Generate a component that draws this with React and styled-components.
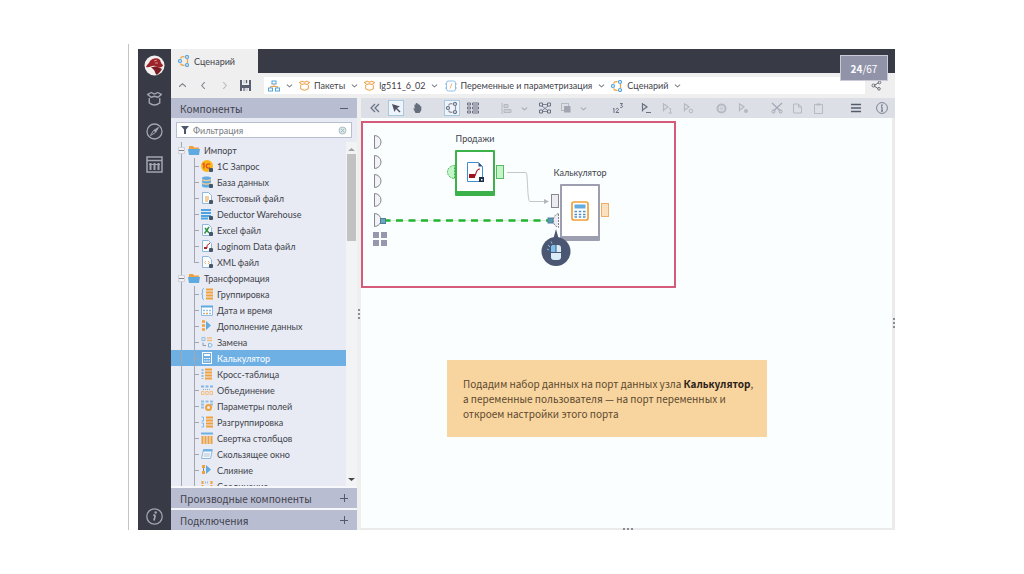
import React, { Component } from 'react'
import styled, { createGlobalStyle } from 'styled-components'


// ---------- icons ----------

const Svg = ({ s = 12, w, h, vb, children }) => (
    <svg width={w || s} height={h || s} viewBox={vb || `0 0 ${w || s} ${h || s}`} fill="none" aria-hidden="true">
        {children}
    </svg>
)

const FileBase = () => (
    <path d="M1.5 .5h6l3 3v8h-9z" fill="#fbfdff" stroke="#8fb6dc" />
)
const Badge = () => (
    <rect x="8" y="8" width="4" height="4" rx="1" fill="#44566c" />
)
const Bars = ({ color = '#f0a03c', x = 5 }) => (
    <path d={`M${x} 1.5h7M${x} 4.5h7M${x} 7.5h7M${x} 10.5h7`} stroke={color} strokeWidth="2" />
)

const treeIcons = {
    folder: <Svg><path d="M1 2h4l1 1.500h5v3H1z" fill="#f0a03c" /><path d="M0 5h12l-1 6H1z" fill="#5ea9e0" /></Svg>,
    onec: <Svg><circle cx="6" cy="6" r="6" fill="#fbb616" /><path d="M1.500 4.500l1.500-1v5M9 4.500a2.200 2.200 0 1 0 0 3" stroke="#e2501f" strokeWidth="1.300" /><Badge /></Svg>,
    db: <Svg><path d="M1 2c0-2 9-2 9 0v8c0 2-9 2-9 0z" fill="#62abe0" /><path d="M1 3.500c2 1.500 7 1.500 9 0M1 7c2 1.500 7 1.500 9 0" stroke="#f3cd94" strokeWidth="1.300" /><Badge /></Svg>,
    text: <Svg><FileBase /><path d="M4 5h4M4 7h4M4 9h3" stroke="#f0a03c" /><Badge /></Svg>,
    dw: <Svg><path d="M0 2h10M0 5h10M0 8h10M0 10.500h7" stroke="#4fa3e0" strokeWidth="2" /><Badge /></Svg>,
    excel: <Svg><FileBase /><path d="M4 4l4 5M8 3L3.500 9.500" stroke="#2f9448" strokeWidth="1.500" /><Badge /></Svg>,
    lgd: <Svg><FileBase /><path d="M9 3L6 5.500V8" stroke="#b1202a" /><rect x="3" y="7" width="3" height="2" fill="#b1202a" /><Badge /></Svg>,
    xml: <Svg><FileBase /><path d="M5 5L3.500 6.500 5 8M7 5l1.500 1.500L7 8" stroke="#efb878" /><Badge /></Svg>,
    group: <Svg><path d="M3 .5c-3 0 0 5-2.500 5.500C3 6.500 0 11.500 3 11.500" stroke="#6db1e4" /><Bars /></Svg>,
    date: <Svg><path d="M.5 2.500h11v9H.5z" fill="#fff" stroke="#8fbfe6" /><path d="M0 2.500h12" stroke="#5ea9e0" strokeWidth="2" /><path d="M2 6.500h2M5 6.500h2M8 6.500h2M2 9.500h2M8 9.500h2" stroke="#8fbfe6" strokeWidth="1.500" /><path d="M5 9.500h2" stroke="#f0a03c" strokeWidth="1.500" /></Svg>,
    enrich: <Svg><path d="M1 1.500h3M1 5.500h3M1 9.500h3" stroke="#f0a03c" strokeWidth="2.500" /><path d="M5 1l5 4.500L5 10z" fill="#62abe0" /></Svg>,
    replace: <Svg><path d="M1 1.500h3v3H1z" stroke="#8fbfe6" /><path d="M6 2h5M6 4.500h5" stroke="#f3bf80" strokeWidth="1.500" /><path d="M2 6.500v3h3" stroke="#8a99ad" /><path d="M7.500 7.500h2c2 0 2 3.500 0 3.500h-2z" stroke="#7eb8e6" /></Svg>,
    calc: <Svg><rect x="1.500" y=".5" width="9" height="11" stroke="#fff" /><path d="M3 3h6" stroke="#fff" strokeWidth="2" /><path d="M3 6.500h1.500M5.250 6.500h1.500M7.500 6.500H9M3 9h1.500M5.250 9h1.500M7.500 9H9" stroke="#fff" /></Svg>,
    cross: <Svg><path d="M1.500 1v10" stroke="#8fbfe6" strokeDasharray="2 1" strokeWidth="2" /><Bars x={4} /></Svg>,
    union: <Svg><path d="M0 2.500h3M4.500 2.500h3M9 2.500h3" stroke="#7eb8e6" strokeWidth="2" /><path d="M2 5.500h8" stroke="#9aa7b8" strokeDasharray="1 1" /><path d="M.5 7.500h2.500v3H.5zM4.750 7.500h2.500v3h-2.500zM9 7.500h2.500v3H9z" stroke="#f3bf80" /></Svg>,
    fields: <Svg><path d="M0 1.500h3M4.500 1.500h3M9 1.500h3M0 4.500h3M9 4.500h3M0 7.500h3" stroke="#8fbfe6" strokeWidth="2" /><circle cx="7.500" cy="7.500" r="2.500" stroke="#f0a03c" strokeWidth="2" /></Svg>,
    ungroup: <Svg><path d="M.5 1h2v4h-2M.5 7h2v4h-2" stroke="#7eb8e6" /><Bars /></Svg>,
    fold: <Svg><path d="M0 1.500h12" stroke="#6db1e4" strokeWidth="2" /><path d="M1.500 4v8M4.500 4v8M7.500 4v8M10.500 4v8" stroke="#f0a03c" strokeWidth="2" /></Svg>,
    slide: <Svg><path d="M2.500 1.500h9l-2 9h-9z" fill="#f4f9fe" stroke="#8fb6dc" /><path d="M2 2.500h9" stroke="#6db1e4" strokeWidth="2" /><path d="M3 6h6M2.500 8h6" stroke="#b4c3d4" /></Svg>,
    merge: <Svg><path d="M1 1h3v3H1zM1 7h3v3H1z" fill="#f0a03c" /><path d="M2.500 4v3" stroke="#7d8896" /><path d="M5 1l5 4.500L5 10z" fill="#62abe0" /></Svg>,
    join: <Svg><path d="M1.500 1v11M10.500 1v11" stroke="#f0a03c" strokeWidth="2" strokeDasharray="3 1" /><path d="M4 2.500h4" stroke="#8fbfe6" strokeWidth="2" strokeDasharray="1 1" /><path d="M6 6v6" stroke="#8fbfe6" strokeWidth="2" /></Svg>
}

const ScenarioIcon = ({ s = 12, a = '#4fa3e0', b = '#f0a03c' }) => (
    <Svg s={s} vb="0 0 12 12">
        <path d="M2.500 3.500c.5-1.500 2-2 4-1.700M2.500 8.500c.5 1.500 2 2 4 1.700M9.500 4v4" stroke={b} strokeWidth="1.200" />
        <circle cx="2" cy="6" r="1.500" stroke={a} strokeWidth="1.200" />
        <circle cx="9" cy="2" r="1.500" stroke={a} strokeWidth="1.200" />
        <circle cx="9" cy="10" r="1.500" stroke={a} strokeWidth="1.200" />
    </Svg>
)
const PackageIcon = ({ s = 11, color = '#efa24a' }) => (
    <Svg s={s} vb="0 0 12 12">
        <path d="M6 2.500L3.500 1.200 .5 2.700 3.200 5 6 4.200 8.800 5l2.700-2.300-3-1.500L6 2.500M1.800 5.500v4c2.500 2 5.900 2 8.400 0v-4" stroke={color} strokeWidth="1.100" strokeLinejoin="round" />
    </Svg>
)
const TreeRootIcon = () => (
    <Svg>
        <rect x="4" y="1" width="4" height="3" stroke="#4fa3e0" />
        <path d="M6 4v2.500M2.500 8V6.500h7V8" stroke="#efa24a" />
        <rect x=".5" y="8" width="4" height="3" stroke="#4fa3e0" />
        <rect x="7.500" y="8" width="4" height="3" stroke="#4fa3e0" />
    </Svg>
)
const ModuleIcon = () => (
    <Svg>
        <rect x="1.500" y="1" width="9" height="10" rx="2" stroke="#8cc0e8" />
        <path d="M0 4h2M0 8h2M10 4h2M10 8h2" stroke="#8cc0e8" />
        <path d="M7 3.500L5 8.500" stroke="#efb878" />
    </Svg>
)
const Chevron = ({ dir = 'down', color = '#7d8089', w = 7 }) => {
    const d = { down: 'M1 3l3 2.500L7 3', up: 'M0 5.500L4 2l4 3.500', left: 'M5.500 0L2 4l3.500 4', right: 'M2.500 0L6 4 2.500 8' }
    return <Svg s={w} vb="0 0 8 8"><path d={d[dir]} stroke={color} strokeWidth="1.200" /></Svg>
}
const LogoIcon = () => (
    <Svg s={21}>
        <circle cx="10.500" cy="10.500" r="10" fill="#f4efef" />
        <path d="M2 12c1-3 3-3 4-6 2-3 8-4 10-1 1 2 1 4 3 5 0 2-3 3-5 2l-3-1c-3-1-5 2-9 1z" fill="#9c2429" />
        <path d="M7 12c3 0 5-1 7 0l4 2-2 3-3 3c-2-1-2-4-3-5z" fill="#7b1c22" />
        <path d="M10 6l3-1M11 8l3 0" stroke="#d98a86" />
    </Svg>
)
const CompassIcon = () => (
    <Svg s={17}><circle cx="8.500" cy="8.500" r="7.500" stroke="#a3a5b0" strokeWidth="1.300" /><path d="M12.500 4.500l-3 5-5 3 3-5z" stroke="#a3a5b0" /><path d="M12.500 4.500l-3 5-2-2z" fill="#a3a5b0" /></Svg>
)
const TableIcon = () => (
    <Svg s={17}><rect x="1" y="1" width="15" height="15" stroke="#a3a5b0" strokeWidth="1.500" /><path d="M1 4.500h15" stroke="#a3a5b0" strokeWidth="1.500" /><path d="M4.500 7v7M8.500 7v7M12.500 7v7" stroke="#a3a5b0" strokeWidth="2" /><path d="M3 8.500h11" stroke="#a3a5b0" /></Svg>
)
const InfoIcon = ({ s = 17, color = '#a3a5b0', slant = true }) => (
    <Svg s={s} vb="0 0 17 17"><circle cx="8.500" cy="8.500" r="7.700" stroke={color} strokeWidth="1.300" /><path d={slant ? 'M9.300 7l-1.300 5.500M7.300 7.200h2' : 'M8.500 7v6M7 7h1.500M7 12.800h3'} stroke={color} strokeWidth="1.700" /><circle cx={slant ? 9.700 : 8.500} cy="4.500" r="1.200" fill={color} /></Svg>
)
const SaveIcon = () => (
    <Svg s={11}><path d="M0 0h2v5h7V0h2v11H9V8H2v3H0z" fill="#5a5f70" /><path d="M3 0h5v3.500H3zM3 8h5v3H3z" fill="#d4d6dc" /><path d="M6.500 0v3M4 8v3" stroke="#5a5f70" /></Svg>
)
const ShareIcon = () => (
    <Svg s={11}><path d="M3 5.500L8 2.500M3 6l4 2.500" stroke="#6b6f7a" /><circle cx="2.500" cy="5.500" r="1.500" stroke="#6b6f7a" /><circle cx="8.500" cy="2.500" r="1.300" stroke="#6b6f7a" /><circle cx="8" cy="8.800" r="1.300" stroke="#6b6f7a" /></Svg>
)
const FunnelIcon = () => (
    <Svg s={8}><path d="M0 0h8L5 3.500V8H3V3.500z" fill="#4b5468" /></Svg>
)

const dark = '#6a7183'
const pale = '#b4b9c2'
const Play = ({ color, children }) => (
    <Svg><path d="M2.500 1v8.500M2.500 1.500L7 5 2.500 8" stroke={color} strokeWidth="1.200" />{children}</Svg>
)

const tools = [
    { id: 'Свернуть', icon: <Svg s={10}><path d="M5 1L1 5l4 4M9 1L5 5l4 4" stroke={dark} strokeWidth="1.200" /></Svg> },
    { id: 'Выделение', framed: true, icon: <Svg s={10}><path d="M1 1l8 2.500-3 1.500L9.500 8.500 8.500 9.500 5 6 3.500 9z" fill="#4b5266" /></Svg> },
    { id: 'Перемещение', icon: <Svg><path d="M2 6l1.500 1V2.500h1.300V1h1.400v.8h1.400v1H9v1.400h1.300v4L8.500 11h-4z" fill="#666d7c" /></Svg> },
    { id: 'Схема', gap: 14, framed: true, icon: <ScenarioIcon a="#6a7183" b="#8d94a3" /> },
    { id: 'Список', icon: <Svg><path d="M.5 1h3v2h-3zM.5 5h3v2h-3zM.5 9h3v2h-3zM5.500 1h6v2h-6zM5.500 5h6v2h-6zM5.500 9h6v2h-6z" stroke={dark} /></Svg> },
    { id: 'Выравнивание', gap: 13, icon: <Svg s={11}><path d="M1 0v11" stroke={pale} /><path d="M3 1.500h4v3H3zM3 6.500h7v3H3z" fill="#cbcfd7" stroke={pale} /></Svg> },
    { id: 'Варианты выравнивания', width: 14, icon: <Chevron color="#a4a9b4" /> },
    { id: 'Разместить', gap: 3, icon: <Svg><path d="M4 2.500h4M4 9.500h4M3 4l5 4M9 4L4 8" stroke={dark} strokeWidth=".8" /><path d="M.5 1h3v3h-3zM8.500 1h3v3h-3zM.5 8h3v3h-3zM8.500 8h3v3h-3z" fill="#dfe2e9" stroke={dark} /></Svg> },
    { id: 'Порядок', icon: <Svg s={10}><rect x=".5" y=".5" width="7" height="7" stroke={pale} /><rect x="3" y="3" width="6.500" height="6.500" fill="#a0a5b0" /></Svg> },
    { id: 'Варианты порядка', width: 14, icon: <Chevron color="#a4a9b4" /> },
    { id: 'Нумерация', gap: 17, icon: <Svg><path d="M1 7l1-.7V11M4 7.500c0-1.500 2.500-1.500 2.500 0L4 10.500h3M8 1.500h2.500L9 3.500c2.500 0 2 2.500-.8 2" stroke={dark} /></Svg> },
    { id: 'Выполнить', gap: 7, icon: <Play color={dark}><path d="M6 10.500h5" stroke={dark} /></Play> },
    { id: 'Выполнить узел', icon: <Play color={pale}><path d="M8 6.500h1.500V11M7.500 11h3.500" stroke={pale} /></Play> },
    { id: 'Настроить запуск', icon: <Play color={pale}><circle cx="9" cy="9" r="1.800" stroke={pale} /></Play> },
    { id: 'Остановить', gap: 13, icon: <Svg s={11}><circle cx="5.500" cy="5.500" r="4" stroke={pale} strokeWidth="2" /><circle cx="5.500" cy="5.500" r="2" fill="#c9cdd5" /></Svg> },
    { id: 'Переобучить', icon: <Play color={pale}><circle cx="9" cy="9" r="2" fill={pale} /></Play> },
    { id: 'Вырезать', gap: 13, icon: <Svg><path d="M1 1l8.500 8M11 1L2.500 9" stroke="#a4a9b4" strokeWidth="1.200" /><circle cx="2.500" cy="9.500" r="1.500" stroke="#a4a9b4" /><circle cx="9.500" cy="9.500" r="1.500" stroke="#a4a9b4" /></Svg> },
    { id: 'Копировать', icon: <Svg s={11}><path d="M1.500 1h5l3 3v6h-8zM6.500 1v3h3" stroke={pale} /></Svg> },
    { id: 'Вставить', icon: <Svg s={11}><path d="M1.500 1.500h8v9h-8z" stroke={pale} /><path d="M3.500 1.500h4" stroke={pale} strokeWidth="2" /></Svg> }
]

const treeData = [
    {
        name: 'Импорт',
        items: [
            ['onec', '1С Запрос'], ['db', 'База данных'], ['text', 'Текстовый файл'], ['dw', 'Deductor Warehouse'],
            ['excel', 'Excel файл'], ['lgd', 'Loginom Data файл'], ['xml', 'XML файл']
        ]
    },
    {
        name: 'Трансформация',
        items: [
            ['group', 'Группировка'], ['date', 'Дата и время'], ['enrich', 'Дополнение данных'], ['replace', 'Замена'],
            ['calc', 'Калькулятор'], ['cross', 'Кросс-таблица'], ['union', 'Объединение'], ['fields', 'Параметры полей'],
            ['ungroup', 'Разгруппировка'], ['fold', 'Свертка столбцов'], ['slide', 'Скользящее окно'],
            ['merge', 'Слияние'], ['join', 'Соединение']
        ]
    }
]

const crumbs = [
    { icon: <TreeRootIcon /> },
    { icon: <PackageIcon />, text: 'Пакеты' },
    { icon: <PackageIcon />, text: 'lg511_6_02' },
    { icon: <ModuleIcon />, text: 'Переменные и параметризация' },
    { icon: <ScenarioIcon />, text: 'Сценарий' }
]


class ComponentTree extends Component {

    render() {
        const { selected, filter, onSelect } = this.props
        const match = name => name.toLowerCase().includes(filter.toLowerCase())

        return (
            <Tree>
                {treeData.map((group, g) => {
                    const items = group.items.filter(item => match(item[1]))
                    return (
                        <li key={group.name}>
                            <TreeRow type="button">
                                <Rail $width={11} $start={g === 0} />
                                <Toggle />
                                {treeIcons.folder}
                                <RowText>{group.name}</RowText>
                            </TreeRow>
                            <ul>
                                {items.map(([icon, name], i) => (
                                    <li key={name}>
                                        <TreeRow type="button" $active={selected === name} onClick={() => onSelect(name)}>
                                            <Rail $width={11} />
                                            <Rail $width={13} $end={g === 0 && i === items.length - 1} />
                                            <Tick />
                                            {treeIcons[icon]}
                                            <RowText>{name}</RowText>
                                        </TreeRow>
                                    </li>
                                ))}
                            </ul>
                        </li>
                    )
                })}
            </Tree>
        )
    }
}


// wires and ports between the nodes
const Wires = () => (
    <WireLayer width="260" height="170" viewBox="0 0 260 170" fill="none" aria-hidden="true">
        {[24, 44, 63, 82, 102].map(y => (
            <path key={y} d={`M13.500 ${y - 6.500}a6.500 6.500 0 0 1 0 13z`} fill="#f3f2f7" stroke="#85868f" />
        ))}
        <path d="M12 114h6v6h-6zM20 114h6v6h-6zM12 122h6v6h-6zM20 122h6v6h-6z" fill="#9698ad" />
        <path d="M25 102.500h162" stroke="#d3f0d7" />
        <path d="M25 102.500h163" stroke="#22b32f" strokeWidth="2.600" strokeDasharray="7 5.500" strokeDashoffset="2.500" />
        <rect x="19.500" y="100.500" width="5" height="5" fill="#6da5bd" stroke="#4b7f99" />

        <path d="M93.500 47.500a7 6.500 0 0 0 0 13z" fill="#c3f5c8" stroke="#3fae4c" strokeDasharray="2 1" />
        <rect x="135.500" y="47.500" width="7" height="13" fill="#c3f5c8" stroke="#5cb867" />

        <path d="M146 54.500h19c2 0 1 29 4 29h14" stroke="#c4c6ca" />
        <path d="M183 81l5 2.500-5 2.500z" fill="#b4b6ba" />
        <rect x="190.500" y="76.500" width="7" height="13" fill="#ecebf2" stroke="#85868f" />
        <path d="M197.500 95.500c-7 2-7 12 0 14z" fill="#ecebf2" stroke="#85868f" strokeDasharray="2 1" />
        <rect x="187" y="100" width="5" height="5" fill="#5b9ab5" stroke="#4b7f99" />
        <rect x="240.500" y="85.500" width="7" height="13" fill="#fde0bd" stroke="#eeae6c" />
    </WireLayer>
)

const MouseHint = () => (
    <HintLayer width="30" height="38" viewBox="0 0 30 38" fill="none" aria-hidden="true">
        <path d="M15 0l3 11h-6z" fill="#4a5672" />
        <circle cx="15" cy="22.500" r="14.500" fill="#4a5672" />
        <rect x="10" y="16" width="10" height="15" rx="3" fill="#d9ecf8" />
        <path d="M10 23v-4a3 3 0 0 1 3-3h2v7z" fill="#7cc0ee" />
        <path d="M10 23.500h10M15 16v7.500" stroke="#4a5672" />
        <path d="M6 20l2 1M7 16l2 2M10 12.500l1 2" stroke="#7cc0ee" />
    </HintLayer>
)

const LoginomFile = () => (
    <Svg w={20} h={22}>
        <path d="M2.500 1.500h11l4 4v15h-15z" fill="#fff" stroke="#3f8fd0" />
        <path d="M13.500 1.500v4h4z" fill="#31568a" />
        <path d="M15 8c-5 0-3 6-6 8" stroke="#b1202a" strokeWidth="1.200" />
        <rect x="4" y="13" width="6" height="4" fill="#9c1420" />
        <rect x="14" y="16" width="5" height="5" fill="#1d2f49" />
        <rect x="16" y="18" width="1.500" height="1.500" fill="#fff" />
    </Svg>
)

const CalcIcon = () => (
    <Svg w={18} h={20}>
        <rect x="1" y="1" width="16" height="18" rx="2" fill="#fff" stroke="#f0a03c" strokeWidth="1.700" />
        <rect x="3.500" y="3.500" width="11" height="4" fill="#62abe0" />
        <path d="M3.500 10.500h11M3.500 13.500h11M3.500 16h11" stroke="#4f8fc8" strokeWidth="1.500" strokeDasharray="2.500 1.750" />
    </Svg>
)


class App extends Component {

    state = {
        selected: 'Калькулятор',
        filter: ''
    }

    handleSelect = name => {
        this.setState({ selected: name })
    }

    handleFilter = event => {
        this.setState({ filter: event.target.value })
    }

    render() {
        const { selected, filter } = this.state

        return (
            <Slide>
                <GlobalStyle />
                <Workspace>
                    <MainMenu>
                        <MenuButton aria-label="Loginom"><LogoIcon /></MenuButton>
                        <MenuButton aria-label="Пакеты"><PackageIcon s={15} color="#a3a5b0" /></MenuButton>
                        <MenuButton aria-label="Навигация"><CompassIcon /></MenuButton>
                        <MenuButton aria-label="Отчёты"><TableIcon /></MenuButton>
                        <MenuButton $last aria-label="О программе"><InfoIcon /></MenuButton>
                    </MainMenu>

                    <Main>
                        <TabBar>
                            <Tab href="#scenario"><ScenarioIcon />Сценарий</Tab>
                        </TabBar>

                        <NavBar>
                            <NavButtons>
                                <NavButton aria-label="Вверх"><Chevron dir="up" /></NavButton>
                                <NavButton aria-label="Назад"><Chevron dir="left" /></NavButton>
                                <NavButton aria-label="Вперёд"><Chevron dir="right" color="#b5b7bc" /></NavButton>
                                <NavButton aria-label="Сохранить"><SaveIcon /></NavButton>
                            </NavButtons>
                            <Crumbs>
                                {crumbs.map((crumb, i) => (
                                    <Crumb key={i} href="#path" aria-label={crumb.text || 'Корень'}>
                                        {crumb.icon}
                                        {crumb.text && <span>{crumb.text}</span>}
                                        <CrumbArrow><Chevron /></CrumbArrow>
                                    </Crumb>
                                ))}
                            </Crumbs>
                            <ShareButton aria-label="Связи"><ShareIcon /></ShareButton>
                        </NavBar>

                        <Body>
                            <Panel>
                                <PanelHeader>Компоненты<Sign $minus /></PanelHeader>
                                <FilterBox>
                                    <FunnelIcon />
                                    <input aria-label="Фильтрация" placeholder="Фильтрация" value={filter} onChange={this.handleFilter} />
                                    <Svg s={9}><circle cx="4.500" cy="4.500" r="3.500" fill="#dbe8ea" stroke="#a9bfc4" /><path d="M3 3l3 3M6 3L3 6" stroke="#a3bbbf" /></Svg>
                                </FilterBox>
                                <TreeArea>
                                    <ComponentTree selected={selected} filter={filter} onSelect={this.handleSelect} />
                                    <ScrollBar>
                                        <Svg w={7} h={4}><path d="M0 4l3.500-3L7 4z" fill="#a3a3a3" /></Svg>
                                        <Thumb />
                                        <Svg w={7} h={4}><path d="M0 0l3.500 3L7 0z" fill="#444" /></Svg>
                                    </ScrollBar>
                                </TreeArea>
                                <PanelHeader $gap>Производные компоненты<Sign /></PanelHeader>
                                <PanelHeader $gap>Подключения<Sign /></PanelHeader>
                            </Panel>

                            <Splitter><i /><i /><i /></Splitter>

                            <Editor>
                                <ToolBar>
                                    {tools.map(tool => (
                                        <ToolButton key={tool.id} aria-label={tool.id} $gap={tool.gap} $width={tool.width}>
                                            {tool.framed ? <ToolFrame>{tool.icon}</ToolFrame> : tool.icon}
                                        </ToolButton>
                                    ))}
                                    <ToolRight>
                                        <ToolButton aria-label="Меню" $width={26}><Svg s={10}><path d="M0 1.500h10M0 5h10M0 8.500h10" stroke="#565c6c" strokeWidth="1.300" /></Svg></ToolButton>
                                        <ToolButton aria-label="Справка" $width={26}><InfoIcon s={12} color="#747b8a" slant={false} /></ToolButton>
                                    </ToolRight>
                                </ToolBar>

                                <CanvasRow>
                                    <Canvas>
                                        <Wires />
                                        <Node $left={84} $top={13}>
                                            <NodeTitle>Продажи</NodeTitle>
                                            <NodeBox $color="#3db14a" $height={46}><LoginomFile /></NodeBox>
                                        </Node>
                                        <Node $left={189} $top={47}>
                                            <NodeTitle>Калькулятор</NodeTitle>
                                            <NodeBox $color="#9d9eaf" $height={57}><CalcIcon /></NodeBox>
                                        </Node>
                                        <MouseHint />
                                        <Frame />
                                        <Note>
                                            Подадим набор данных на порт данных узла <b>Калькулятор</b>,<br />
                                            а переменные пользователя — на порт переменных и<br />
                                            откроем настройки этого порта
                                        </Note>
                                    </Canvas>
                                    <Edge><i /><i /><i /></Edge>
                                </CanvasRow>
                                <BottomEdge><i /><i /><i /></BottomEdge>
                            </Editor>
                        </Body>
                    </Main>
                    <Counter><b>24</b>/67</Counter>
                </Workspace>
            </Slide>
        )
    }
}

export default App;

const GlobalStyle = createGlobalStyle`
* {
    box-sizing: border-box;
}
body {
    margin: 0;
    background: #fff;
    color: #3f424b;
    font-family: Lato, "Open Sans", sans-serif;
    font-size: 9px;
}
button {
    padding: 0;
    border: 0;
    background: none;
    color: inherit;
    font: inherit;
}
a {
    color: inherit;
    text-decoration: none;
}
ul {
    margin: 0;
    padding: 0;
    list-style: none;
}
svg {
    flex: none;
    display: block;
}
`;

const sourceFont = '"Noto Sans CJK SC", "Open Sans", sans-serif';

const Slide = styled.div`
    display: flex;
    height: 100vh;
    min-height: 400px;
    padding: 44px 129px 44px 128px;
`;

const Workspace = styled.div`
    position: relative;
    flex: 1;
    display: flex;
    min-width: 0;
    padding: 5px 0 0 9px;
    border-left: 1px solid #c4c4c6;
`;

const MainMenu = styled.nav`
    flex: none;
    display: flex;
    flex-direction: column;
    width: 33px;
    background: #383a45;
`;

const MenuButton = styled.button`
    display: flex;
    align-items: center;
    justify-content: center;
    height: ${props => props.$last ? '28px' : '33px'};
    margin-top: ${props => props.$last ? 'auto' : '0'};
`;

const Main = styled.div`
    flex: 1;
    display: flex;
    flex-direction: column;
    min-width: 0;
    background: #efeff0;
`;

const TabBar = styled.div`
    display: flex;
    height: 24px;
    background: #383a45;
`;

const Tab = styled.a`
    display: flex;
    align-items: center;
    gap: 4px;
    width: 87px;
    padding-left: 7px;
    background: #efeff0;
`;

const NavBar = styled.div`
    display: flex;
    align-items: center;
    height: 25px;
`;

const NavButtons = styled.div`
    display: flex;
    width: 93px;
    padding-left: 1px;
`;

const NavButton = styled.button`
    display: flex;
    align-items: center;
    justify-content: center;
    width: 21px;
    height: 16px;
`;

const Crumbs = styled.nav`
    flex: 1;
    display: flex;
    align-items: center;
    height: 17px;
    padding-left: 4px;
    background: #fff;
`;

const Crumb = styled.a`
    display: flex;
    align-items: center;
    gap: 4px;
    white-space: nowrap;
`;

const CrumbArrow = styled.span`
    display: flex;
    justify-content: center;
    width: 10px;
    margin-right: 5px;
`;

const ShareButton = styled.button`
    display: flex;
    justify-content: center;
    width: 30px;
    padding-right: 8px;
`;

const Body = styled.div`
    flex: 1;
    display: flex;
    min-height: 0;
`;

const Panel = styled.aside`
    flex: none;
    display: flex;
    flex-direction: column;
    width: 186px;
    background: #e8ebf3;
`;

const PanelHeader = styled.div`
    flex: none;
    display: flex;
    align-items: center;
    justify-content: space-between;
    height: ${props => props.$gap ? '22px' : '20px'};
    padding: 0 9px;
    border-top: ${props => props.$gap ? '2px solid #f6f7fa' : '0'};
    background: #b9bdd2;
    font-family: ${sourceFont};
    font-size: 10px;
`;

const Sign = styled.span`
    width: 8px;
    height: 8px;
    background:
        linear-gradient(#555a6a, #555a6a) center / 8px 1px no-repeat,
        linear-gradient(#555a6a, #555a6a) center / ${props => props.$minus ? '0 0' : '1px 8px'} no-repeat;
`;

const FilterBox = styled.label`
    flex: none;
    display: flex;
    align-items: center;
    gap: 4px;
    height: 16px;
    margin: 4px 5px;
    padding: 0 4px;
    border: 1px solid #b7bfd0;
    background: #fff;

    input {
        flex: 1;
        min-width: 0;
        padding: 0;
        border: 0;
        outline: 0;
        background: none;
        color: inherit;
        font: inherit;
    }
    input::placeholder {
        color: #777a82;
    }
`;

const TreeArea = styled.div`
    flex: 1;
    display: flex;
    min-height: 0;
`;

const Tree = styled.ul`
    flex: 1;
    min-width: 0;
    overflow: hidden;
`;

const TreeRow = styled.button`
    display: flex;
    align-items: center;
    width: 100%;
    height: 16px;
    background: ${props => props.$active ? '#6fb0e4' : 'none'};
    color: ${props => props.$active ? '#fff' : 'inherit'};
`;

const Rail = styled.span`
    flex: none;
    align-self: ${props => props.$start ? 'flex-end' : props.$end ? 'flex-start' : 'stretch'};
    width: ${props => props.$width}px;
    height: ${props => props.$end ? '9px' : '16px'};
    border-right: 1px solid #a2a6b0;
`;

const Tick = styled.span`
    flex: none;
    width: 4px;
    height: 1px;
    margin-right: 2px;
    background: #a2a6b0;
`;

const Toggle = styled.span`
    flex: none;
    width: 7px;
    height: 7px;
    margin: 0 3px 0 -4px;
    border: 1px solid #cfd2d9;
    background: linear-gradient(#7e828c, #7e828c) center / 5px 1px no-repeat #f1f1f3;
`;

const RowText = styled.span`
    margin-left: 4px;
    white-space: nowrap;
`;

const ScrollBar = styled.div`
    display: flex;
    flex-direction: column;
    align-items: center;
    width: 11px;
    padding: 5px 0 4px;
    background: #f2f3f5;

    svg:last-child {
        margin-top: auto;
    }
`;

const Thumb = styled.div`
    width: 9px;
    height: 87px;
    margin-top: 3px;
    background: #c2c2c3;
`;

const Splitter = styled.div`
    flex: none;
    display: flex;
    flex-direction: column;
    align-items: center;
    justify-content: center;
    gap: 2px;
    width: 4px;

    i {
        width: 2px;
        height: 2px;
        background: #8b8d94;
    }
`;

const Editor = styled.div`
    flex: 1;
    display: flex;
    flex-direction: column;
    min-width: 0;
`;

const ToolBar = styled.div`
    flex: none;
    display: flex;
    align-items: center;
    height: 20px;
    padding-left: 3px;
    background: #dcdfe6;
`;

const ToolButton = styled.button`
    flex: none;
    display: flex;
    align-items: center;
    justify-content: center;
    width: ${props => props.$width || 21}px;
    height: 20px;
    margin-left: ${props => props.$gap || 0}px;
`;

const ToolFrame = styled.span`
    display: flex;
    align-items: center;
    justify-content: center;
    width: 16px;
    height: 16px;
    border: 1px solid #a9c9e0;
    background: #eef4fa;
`;

const ToolRight = styled.div`
    display: flex;
    margin-left: auto;
`;

const CanvasRow = styled.div`
    flex: 1;
    display: flex;
    min-height: 0;
`;

const Canvas = styled.div`
    position: relative;
    flex: 1;
    min-width: 0;
    overflow: hidden;
    background: #fafeff;
`;

const WireLayer = styled.svg`
    position: absolute;
    left: 0;
    top: 0;
`;

const HintLayer = styled.svg`
    position: absolute;
    left: 180px;
    top: 111px;
`;

const Node = styled.div`
    position: absolute;
    left: ${props => props.$left}px;
    top: ${props => props.$top}px;
    display: flex;
    flex-direction: column;
    align-items: center;
    gap: 3px;
    width: 60px;
`;

const NodeTitle = styled.div`
    line-height: 16px;
    white-space: nowrap;
`;

const NodeBox = styled.div`
    display: flex;
    align-items: center;
    justify-content: center;
    width: 40px;
    height: ${props => props.$height}px;
    border: 2px solid ${props => props.$color};
    border-bottom-width: 5px;
    border-radius: 1px;
    background: #fff;
`;

const Frame = styled.div`
    position: absolute;
    left: 0;
    top: 3px;
    width: 315px;
    height: 167px;
    border: 2px solid rgb(212, 92, 122);
`;

const Note = styled.div`
    position: absolute;
    left: 86px;
    top: 242px;
    width: 320px;
    padding: 16px;
    background: #f8d49e;
    color: #5c4a30;
    font-family: ${sourceFont};
    font-size: 10px;
    line-height: 15px;
    white-space: nowrap;

    b {
        color: #2a2117;
    }
`;

const Edge = styled(Splitter)`
    width: 3px;
    background: #ebebec;
`;

const BottomEdge = styled(Splitter)`
    flex-direction: row;
    width: auto;
    height: 2px;
    background: #ebebec;
`;

const Counter = styled.div`
    position: absolute;
    right: 7px;
    top: 11px;
    display: flex;
    align-items: center;
    justify-content: center;
    width: 48px;
    height: 26px;
    border: 1px solid #c9cad6;
    background: #9193a9;
    color: #fff;
    font-family: ${sourceFont};
    font-size: 10px;
`;
